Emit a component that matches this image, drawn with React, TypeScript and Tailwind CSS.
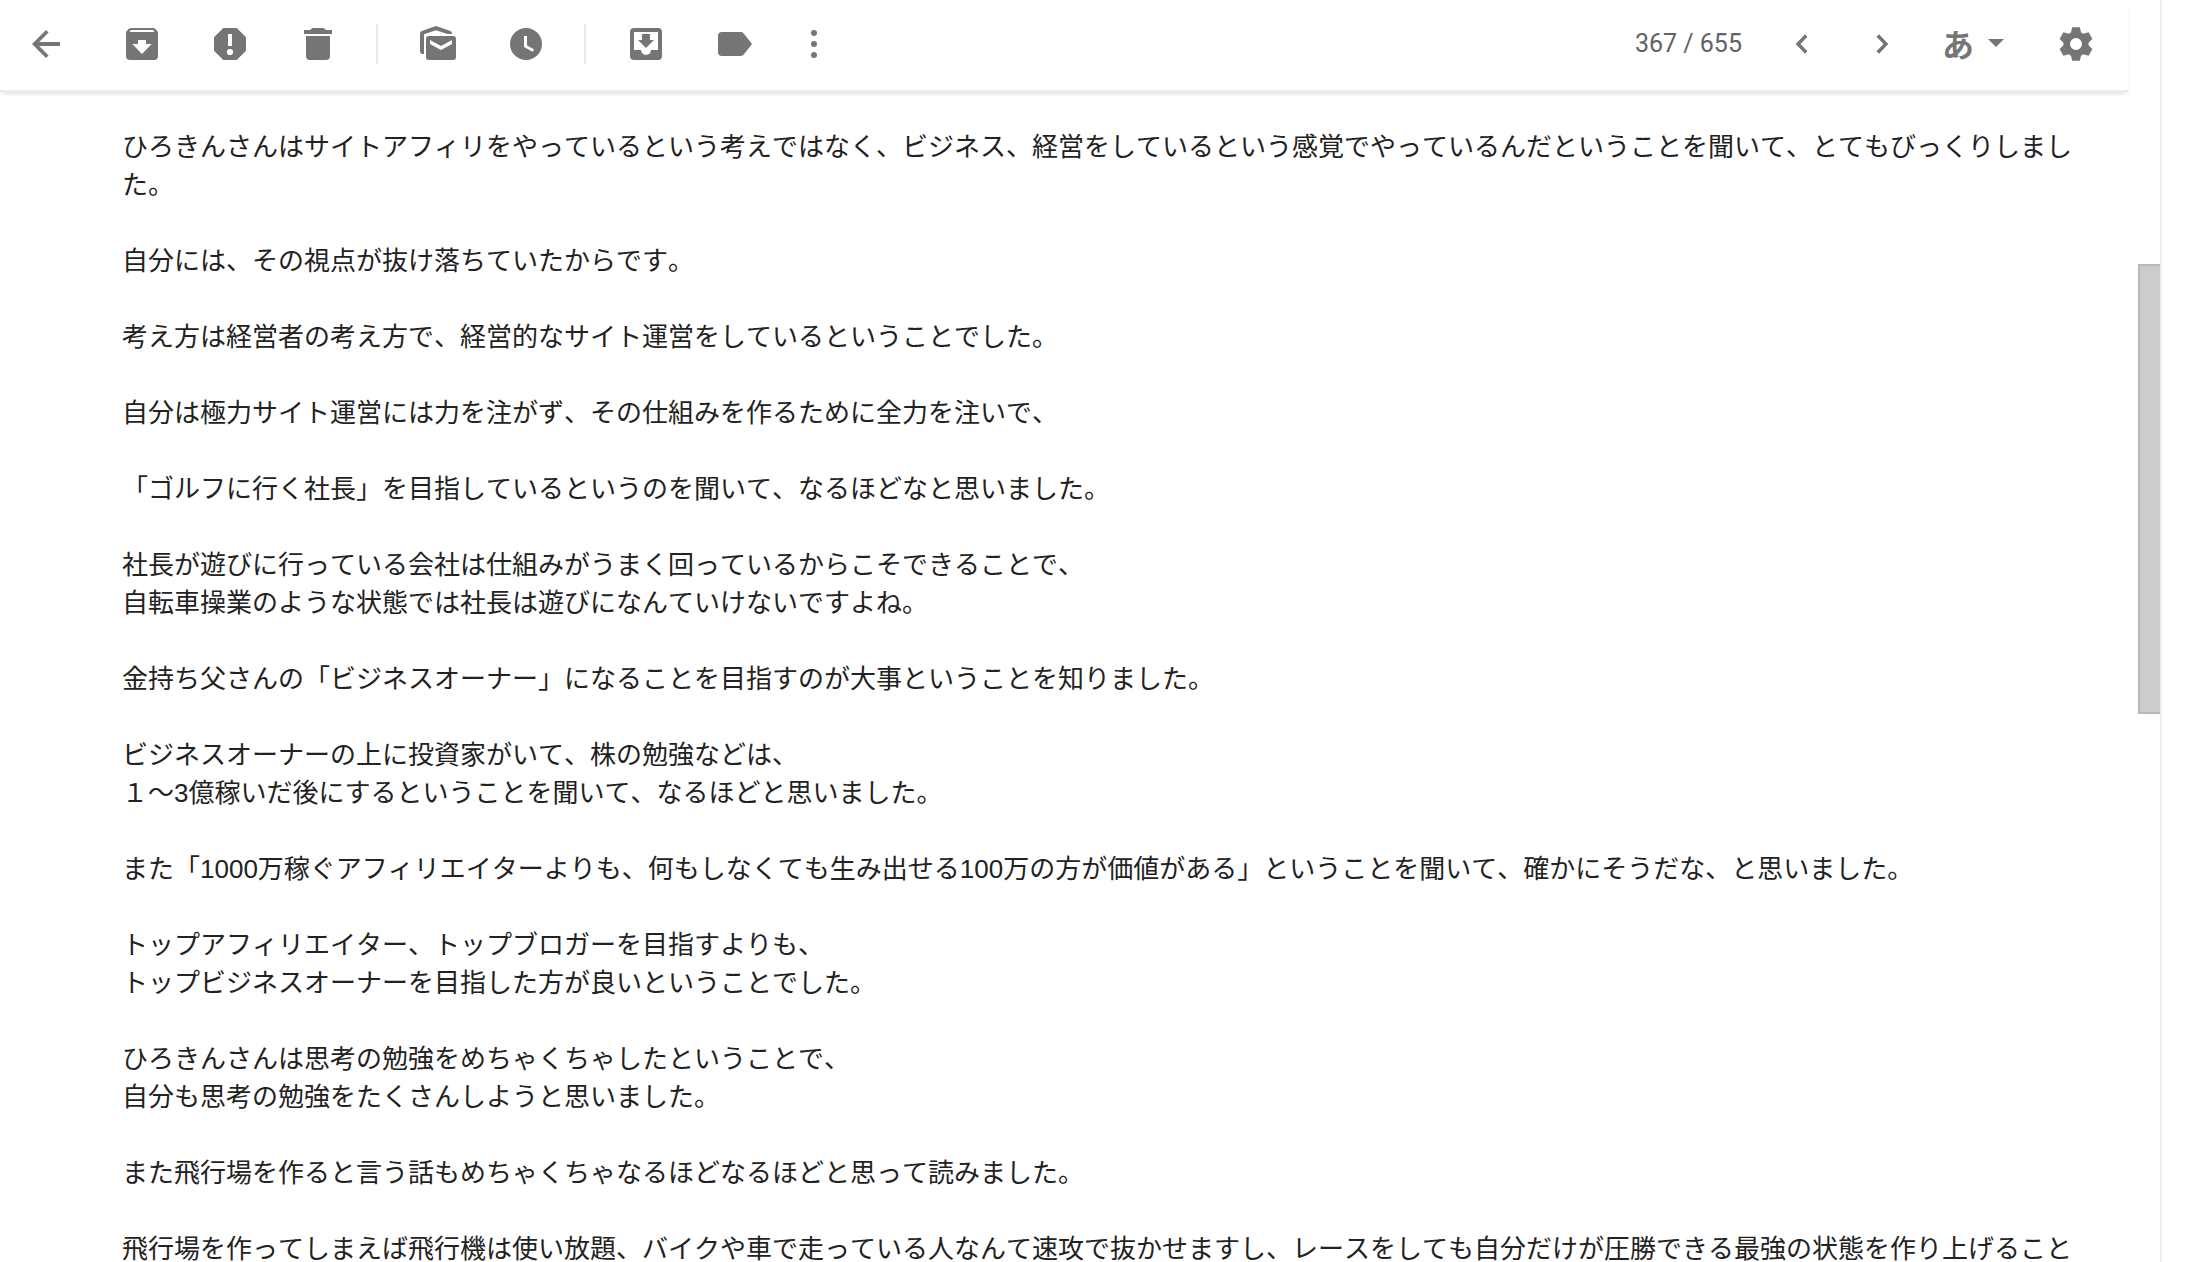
import type { ReactNode } from "react";

type IconButtonProps = {
  label: string;
  children: ReactNode;
};

const paragraphs = [
  ["ひろきんさんはサイトアフィリをやっているという考えではなく、ビジネス、経営をしているという感覚でやっているんだということを聞いて、とてもびっくりしました。"],
  ["自分には、その視点が抜け落ちていたからです。"],
  ["考え方は経営者の考え方で、経営的なサイト運営をしているということでした。"],
  ["自分は極力サイト運営には力を注がず、その仕組みを作るために全力を注いで、"],
  ["「ゴルフに行く社長」を目指しているというのを聞いて、なるほどなと思いました。"],
  [
    "社長が遊びに行っている会社は仕組みがうまく回っているからこそできることで、",
    "自転車操業のような状態では社長は遊びになんていけないですよね。",
  ],
  ["金持ち父さんの「ビジネスオーナー」になることを目指すのが大事ということを知りました。"],
  [
    "ビジネスオーナーの上に投資家がいて、株の勉強などは、",
    "１〜3億稼いだ後にするということを聞いて、なるほどと思いました。",
  ],
  ["また「1000万稼ぐアフィリエイターよりも、何もしなくても生み出せる100万の方が価値がある」ということを聞いて、確かにそうだな、と思いました。"],
  [
    "トップアフィリエイター、トップブロガーを目指すよりも、",
    "トップビジネスオーナーを目指した方が良いということでした。",
  ],
  [
    "ひろきんさんは思考の勉強をめちゃくちゃしたということで、",
    "自分も思考の勉強をたくさんしようと思いました。",
  ],
  ["また飛行場を作ると言う話もめちゃくちゃなるほどなるほどと思って読みました。"],
  ["飛行場を作ってしまえば飛行機は使い放題、バイクや車で走っている人なんて速攻で抜かせますし、レースをしても自分だけが圧勝できる最強の状態を作り上げること"],
];

const gearTeeth = [0, 60, 120, 180, 240, 300];

function IconButton({ label, children }: IconButtonProps) {
  return (
    <button type="button" aria-label={label} className="block size-10 shrink-0">
      <svg viewBox="0 0 40 40" className="size-10" fill="currentColor" aria-hidden="true">
        {children}
      </svg>
    </button>
  );
}

function Divider() {
  return <div className="-ml-0.5 h-10 w-0.5 shrink-0 bg-[#ebebeb]" />;
}

function Toolbar() {
  return (
    <header className="mr-8 flex h-[92px] shrink-0 items-center justify-between border-b-2 border-[#ebebeb] pr-8 pb-0.5 pl-[26px] text-[#757575] shadow-[0_3px_5px_-2px_rgba(0,0,0,0.16)]">
      <div className="flex items-center gap-10">
        <div className="flex items-center gap-12">
          <div className="mr-2">
            <IconButton label="戻る">
              <path d="M20 6 6 20l14 14 2.6-2.6L13.2 22H34v-4H13.2l9.4-9.4z" />
            </IconButton>
          </div>
          <IconButton label="アーカイブ">
            <path
              fillRule="evenodd"
              d="M9 4h22c1 0 2 .6 2.700 1.300L35.200 7c.5.6.8 1.400.8 2.200V32a4 4 0 0 1-4 4H8a4 4 0 0 1-4-4V9.200c0-.8.3-1.600.8-2.200l1.500-1.700C7 4.600 8 4 9 4zM8.800 6 7.600 8h24.800l-1.200-2zM16 16v4h-5.700L20 30l9.700-10H24v-4z"
            />
          </IconButton>
          <IconButton label="迷惑メールを報告">
            <path
              fillRule="evenodd"
              d="M13.300 4h13.400L36 13.300v13.400L26.700 36H13.300L4 26.700V13.300zM18 10v12h4V10zM20 24.900a3.100 3.100 0 1 0 0 6.200 3.100 3.100 0 0 0 0-6.200z"
            />
          </IconButton>
          <IconButton label="削除">
            <path d="M14.500 4h11l2.500 2h6v4H6V6h6zM8 12h24v20a4 4 0 0 1-4 4H12a4 4 0 0 1-4-4z" />
          </IconButton>
        </div>
        <Divider />
        <div className="flex items-center gap-12">
          <IconButton label="未読にする">
            <path d="M6 30H5a3 3 0 0 1-3-3V10c0-1.500.5-2.500 1.800-3L18 2l14.500 5c1 .5 1.500 1.400 1.500 3h-4.500L18 6.200 6 10.300z" />
            <path
              fillRule="evenodd"
              d="M11 12h24a3 3 0 0 1 3 3v18a3 3 0 0 1-3 3H11a3 3 0 0 1-3-3V15a3 3 0 0 1 3-3zm1 4v4l11 6 11-6v-4l-11 6z"
            />
          </IconButton>
          <IconButton label="スヌーズ">
            <path
              fillRule="evenodd"
              d="M20 4a16 16 0 1 0 0 32 16 16 0 0 0 0-32zm-2 8h3v9.600l7 3.700-1.400 2.400L18 23z"
            />
          </IconButton>
        </div>
        <Divider />
        <div className="flex items-center gap-12">
          <IconButton label="移動">
            <path
              fillRule="evenodd"
              d="M8 4h24a4 4 0 0 1 4 4v24a4 4 0 0 1-4 4H8a4 4 0 0 1-4-4V8a4 4 0 0 1 4-4zm0 4v18h7a5 5 0 0 0 10 0h7V8z"
            />
            <path d="M16 10h8v6h4l-8 8-8-8h4z" />
          </IconButton>
          <IconButton label="ラベル">
            <path d="M8 8h18.700c1.300 0 2.500.6 3.200 1.700L38 20l-8.100 10.300c-.7 1.100-1.900 1.700-3.200 1.700H8a4 4 0 0 1-4-4V12a4 4 0 0 1 4-4z" />
          </IconButton>
        </div>
        <IconButton label="その他">
          <circle cx="20" cy="9" r="3" />
          <circle cx="20" cy="20" r="3" />
          <circle cx="20" cy="31" r="3" />
        </IconButton>
      </div>

      <div className="flex items-center gap-[52px]">
        <div className="flex items-center gap-10">
          <span className="font-['Roboto',sans-serif] text-[25px] leading-8 text-[#5f6368]">
            367 / 655
          </span>
          <IconButton label="前のスレッド">
            <path d="M23 10.200 13.700 20l9.300 9.800 2.500-2.500-7-7.300 7-7.300z" />
          </IconButton>
          <IconButton label="次のスレッド">
            <path d="m17 10.200 9.300 9.800-9.300 9.800-2.500-2.500 7-7.300-7-7.300z" />
          </IconButton>
          <button
            type="button"
            aria-label="入力ツール"
            className="flex items-center gap-[14px] pb-0.5 font-['Noto_Sans_CJK_JP',sans-serif] text-[32px] leading-10 font-bold"
          >
            あ
            <svg viewBox="0 0 16 8" className="h-2 w-4" fill="currentColor" aria-hidden="true">
              <path d="M0 0h16L8 8z" />
            </svg>
          </button>
        </div>
        <IconButton label="設定">
          <circle cx="20" cy="20" r="9.300" fill="none" stroke="currentColor" strokeWidth="6.600" />
          {gearTeeth.map((angle) => (
            <path key={angle} d="M16.200 3.300h7.600L25.500 10h-11z" transform={`rotate(${angle} 20 20)`} />
          ))}
        </IconButton>
      </div>
    </header>
  );
}

export default function App() {
  return (
    <div className="flex h-screen overflow-hidden bg-white pr-[30px]">
      <div className="flex min-w-0 flex-1 border-r-2 border-[#f0f0f0]">
        <div className="flex min-w-0 flex-1 flex-col">
          <Toolbar />
          <main className="flex flex-col gap-[38px] overflow-hidden pt-9 pr-[66px] pl-[122px] font-['Liberation_Sans','Noto_Sans_CJK_JP',sans-serif] text-[26px] leading-[38px] text-[#222222] [font-kerning:none]">
            {paragraphs.map((lines) => (
              <p key={lines[0]} lang="ja" className="shrink-0">
                {lines.map((line) => (
                  <span key={line} className="block">
                    {line}
                  </span>
                ))}
              </p>
            ))}
          </main>
        </div>
        <div className="-ml-[22px] w-[22px] shrink-0 pt-[264px]">
          <div className="h-[450px] border-2 border-r-0 border-[#b8b8b8] bg-[#cccccc]" />
        </div>
      </div>
    </div>
  );
}
